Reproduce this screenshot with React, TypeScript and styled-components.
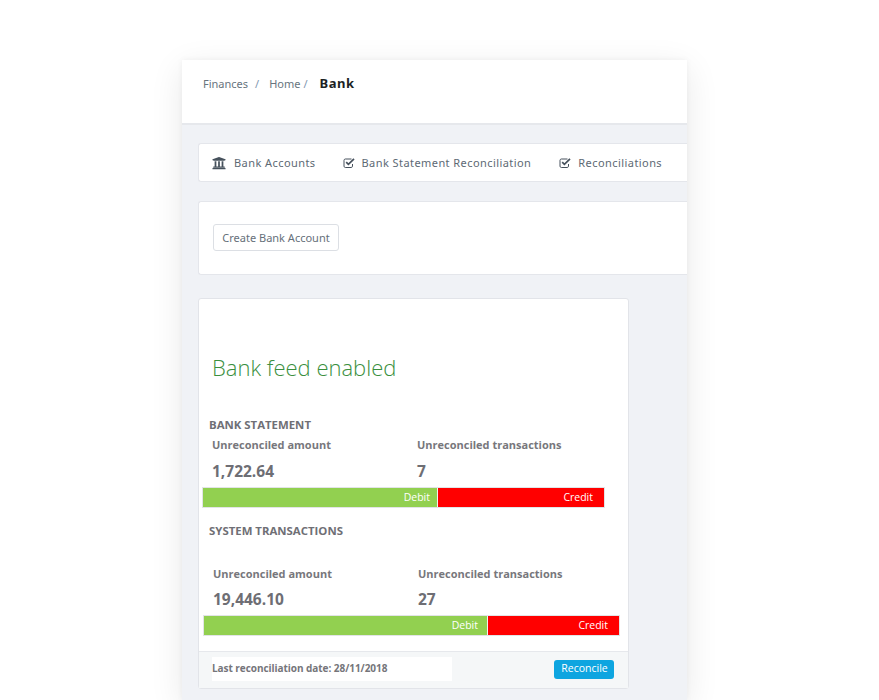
import React from "react";
import styled, { createGlobalStyle } from "styled-components";
import { FaUniversity } from "react-icons/fa";

const Global = createGlobalStyle`
  html, body { margin: 0; padding: 0; background: #fff; }
  * { box-sizing: border-box; }
`;

const Stage = styled.div`
  width: 879px;
  height: 700px;
  padding: 60px 0 0 182px;
  overflow: hidden;
  background: #fff;
`;

const Window = styled.div`
  width: 505px;
  height: 640px;
  background: #f0f2f6;
  box-shadow: 0 8px 32px rgba(0, 0, 0, 0.09), 0 0 6px rgba(0, 0, 0, 0.05);
`;

const Header = styled.header`
  height: 65px;
  background: #fff;
  border-bottom: 2px solid #e6e8ec;
  padding: 14px 0 0 21px;
  display: flex;
  align-items: flex-start;
  font-family: "Noto Sans", sans-serif;
`;

const Crumb = styled.span<{ $gap: number }>`
  font-size: 11px;
  line-height: 20px;
  color: #68747e;
  margin-right: ${(p) => p.$gap}px;
`;

const Slash = styled.span<{ $gap: number }>`
  color: #7f97b0;
  margin-left: ${(p) => p.$gap}px;
`;

const Current = styled.span`
  font-size: 13px;
  font-weight: 700;
  line-height: 18px;
  letter-spacing: 0.5px;
  color: #1c1f24;
`;

const Body = styled.div`
  padding: 18px 0 0 16px;
`;

const Tabs = styled.nav`
  height: 39px;
  background: #fff;
  border: 1px solid #e4e6eb;
  border-right: 0;
  border-radius: 3px 0 0 3px;
  display: flex;
  align-items: center;
  padding-left: 13px;
  font-family: "Noto Sans", sans-serif;
`;

const Tab = styled.span<{ $gap: number; $iconGap: number }>`
  display: inline-flex;
  align-items: center;
  gap: ${(p) => p.$iconGap}px;
  margin-right: ${(p) => p.$gap}px;
  font-size: 11px;
  letter-spacing: 0.43px;
  color: #5d6974;
  white-space: nowrap;
  svg { color: #46515c; flex: none; }
`;

const ActionCard = styled.section`
  height: 74px;
  margin-top: 19px;
  background: #fff;
  border: 1px solid #e4e6eb;
  border-right: 0;
  border-radius: 3px 0 0 3px;
  padding: 22px 0 0 14px;
`;

const OutlineButton = styled.button`
  height: 27px;
  width: 126px;
  padding: 0;
  background: #fff;
  border: 1px solid #dcdfe4;
  border-radius: 3px;
  font-family: "Noto Sans", sans-serif;
  font-size: 11px;
  color: #66707a;
`;

const BankCard = styled.section`
  width: 431px;
  height: 391px;
  margin-top: 23px;
  background: #fff;
  border: 1px solid #e2e4e9;
  border-radius: 3px;
  display: flex;
  flex-direction: column;
  font-family: "Open Sans", sans-serif;
`;

const Content = styled.div`
  flex: 1;
  padding: 51px 0 0 3px;
`;

const Title = styled.h2`
  margin: 0 0 0 10px;
  font-family: "Open Sans", sans-serif;
  font-weight: 300;
  font-size: 22px;
  line-height: 34px;
  color: #3a8f3e;
`;

const SectionLabel = styled.h3<{ $top: number }>`
  margin: ${(p) => p.$top}px 0 0 7px;
  font-family: "Open Sans", sans-serif;
  font-size: 11.4px;
  line-height: 16px;
  font-weight: 700;
  color: #6f6f75;
`;

const Stats = styled.div<{ $top: number; $left: number }>`
  display: grid;
  grid-template-columns: 205px 1fr;
  margin: ${(p) => p.$top}px 0 0 ${(p) => p.$left}px;
`;

const StatLabel = styled.div`
  font-size: 11px;
  line-height: 16px;
  font-weight: 700;
  color: #77777c;
`;

const StatValue = styled.div<{ $top: number }>`
  margin-top: ${(p) => p.$top}px;
  font-size: 15.5px;
  line-height: 20px;
  font-weight: 700;
  color: #6e6e74;
`;

const Bar = styled.div<{ $width: number; $top: number; $left: number }>`
  display: flex;
  width: ${(p) => p.$width}px;
  height: 21px;
  margin: ${(p) => p.$top}px 0 0 ${(p) => p.$left}px;
  border: 1px solid #e2e4e6;
  gap: 1px;
  background: #f3f3ef;
`;

const Segment = styled.div<{ $bg: string; $pad: number }>`
  background: ${(p) => p.$bg};
  color: #fff;
  font-size: 10.5px;
  line-height: 19px;
  text-align: right;
  padding-right: ${(p) => p.$pad}px;
`;

const Footer = styled.footer`
  height: 37px;
  background: #f5f7f8;
  border-top: 1px solid #e6e8ec;
  display: flex;
  align-items: flex-start;
  justify-content: space-between;
  padding: 5px 14px 0 13px;
`;

const DateNote = styled.div`
  width: 240px;
  height: 24px;
  background: #fff;
  font-size: 10px;
  letter-spacing: -0.05px;
  line-height: 23px;
  font-weight: 700;
  color: #75757a;
`;

const Reconcile = styled.button`
  width: 60px;
  height: 19px;
  margin-top: 3px;
  padding: 0 0 3px 1px;
  border: 0;
  border-radius: 3px;
  background: #0ea5e0;
  color: #fff;
  font-family: "Open Sans", sans-serif;
  font-size: 10.5px;
`;

const CheckIcon = () => (
  <svg width="12" height="12" viewBox="0 0 12 12" fill="none" stroke="currentColor" aria-hidden="true">
    <path d="M9.5 7v2.2c0 .7-.6 1.3-1.3 1.3H2.3c-.7 0-1.3-.6-1.3-1.3V3.3C1 2.6 1.6 2 2.3 2h6.2" strokeWidth="1" />
    <path d="M3.2 5.2 5.4 7.4 11 1.8" strokeWidth="1.7" />
  </svg>
);

const StatBlock = ({ amount, count, top, left, valueTop }: { amount: string; count: string; top: number; left: number; valueTop: number }) => (
  <Stats $top={top} $left={left}>
    <div>
      <StatLabel>Unreconciled amount</StatLabel>
      <StatValue $top={valueTop}>{amount}</StatValue>
    </div>
    <div>
      <StatLabel>Unreconciled transactions</StatLabel>
      <StatValue $top={valueTop}>{count}</StatValue>
    </div>
  </Stats>
);

const DebitCredit = ({ width, debit, top, left, pad }: { width: number; debit: number; top: number; left: number; pad: number }) => (
  <Bar $width={width} $top={top} $left={left}>
    <Segment $bg="#92d050" $pad={pad} style={{ width: debit }}>Debit</Segment>
    <Segment $bg="#ff0000" $pad={11} style={{ flex: 1 }}>Credit</Segment>
  </Bar>
);

export default function App() {
  return (
    <Stage>
      <Global />
      <Window>
        <Header>
          <Crumb $gap={10}>Finances<Slash $gap={7}>/</Slash></Crumb>
          <Crumb $gap={12}>Home<Slash $gap={3}>/</Slash></Crumb>
          <Current>Bank</Current>
        </Header>
        <Body>
          <Tabs>
            <Tab $gap={27} $iconGap={8}><FaUniversity size={14} />Bank Accounts</Tab>
            <Tab $gap={28} $iconGap={7}><CheckIcon />Bank Statement Reconciliation</Tab>
            <Tab $gap={0} $iconGap={7}><CheckIcon />Reconciliations</Tab>
          </Tabs>
          <ActionCard>
            <OutlineButton>Create Bank Account</OutlineButton>
          </ActionCard>
          <BankCard>
            <Content>
              <Title>Bank feed enabled</Title>
              <SectionLabel $top={33}>BANK STATEMENT</SectionLabel>
              <StatBlock amount="1,722.64" count="7" top={4} left={10} valueTop={8} />
              <DebitCredit width={403} debit={234} top={6} left={0} pad={7} />
              <SectionLabel $top={15}>SYSTEM TRANSACTIONS</SectionLabel>
              <StatBlock amount="19,446.10" count="27" top={27} left={11} valueTop={7} />
              <DebitCredit width={417} debit={283} top={6} left={1} pad={9} />
            </Content>
            <Footer>
              <DateNote>Last reconciliation date: 28/11/2018</DateNote>
              <Reconcile>Reconcile</Reconcile>
            </Footer>
          </BankCard>
        </Body>
      </Window>
    </Stage>
  );
}
